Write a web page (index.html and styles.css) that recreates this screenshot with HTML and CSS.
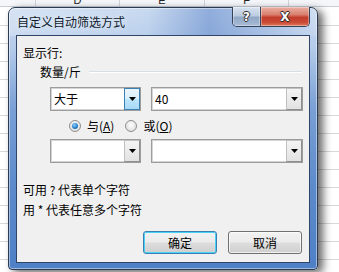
FILE: index.html
```html
<!DOCTYPE html>
<html lang="zh-CN">
<head>
<meta charset="utf-8">
<title>自定义自动筛选方式</title>
<link rel="stylesheet" href="styles.css">
</head>
<body>
<div class="sheet">
  <div class="col-head">
    <div class="hcell w36"></div>
    <div class="hcell w84">D</div>
    <div class="hcell w85">E</div>
    <div class="hcell w84">F</div>
    <div class="hcell wrest"></div>
  </div>
  <div class="grid"></div>
</div>

<div class="window">
  <div class="titlebar">
    <div class="title">自定义自动筛选方式</div>
    <div class="caption-btns">
      <div class="cbtn help">?</div>
      <div class="cbtn close">X</div>
    </div>
  </div>
  <div class="client">
    <div class="label">显示行:</div>
    <div class="group-row">
      <span class="group-name">数量/斤</span>
      <span class="group-line"></span>
    </div>
    <div class="combo-row">
      <div class="combo op">
        <span class="combo-text">大于</span>
        <span class="drop hot"><svg width="7" height="4" viewBox="0 0 7 4"><polygon points="0,0 7,0 3.5,4" fill="#000"/></svg></span>
      </div>
      <div class="combo val">
        <span class="combo-text">40</span>
        <span class="drop"><svg width="7" height="4" viewBox="0 0 7 4"><polygon points="0,0 7,0 3.5,4" fill="#000"/></svg></span>
      </div>
    </div>
    <div class="radio-row">
      <span class="radio on"></span><span class="rlabel">与(<u>A</u>)</span>
      <span class="radio"></span><span class="rlabel">或(<u>O</u>)</span>
    </div>
    <div class="combo-row second">
      <div class="combo op">
        <span class="combo-text"></span>
        <span class="drop"><svg width="7" height="4" viewBox="0 0 7 4"><polygon points="0,0 7,0 3.5,4" fill="#000"/></svg></span>
      </div>
      <div class="combo val">
        <span class="combo-text"></span>
        <span class="drop"><svg width="7" height="4" viewBox="0 0 7 4"><polygon points="0,0 7,0 3.5,4" fill="#000"/></svg></span>
      </div>
    </div>
    <div class="hints">
      <div>可用 ? 代表单个字符</div>
      <div>用 * 代表任意多个字符</div>
    </div>
    <div class="buttons">
      <div class="btn default">确定</div>
      <div class="btn">取消</div>
    </div>
  </div>
</div>
</body>
</html>
```

FILE: styles.css
```css
html, body {
  margin: 0;
  padding: 0;
}
body {
  width: 339px;
  height: 272px;
  overflow: hidden;
  background: #ffffff;
  font-family: "Noto Sans CJK SC", "Noto Sans", sans-serif;
  font-size: 12px;
  color: #000;
  position: relative;
}

/* spreadsheet behind */
.sheet {
  width: 339px;
  height: 272px;
  display: flex;
  flex-direction: column;
}
.col-head {
  height: 6px;
  display: flex;
  border-bottom: 1px solid #c6cdd6;
  background: #f4f6f9;
  flex: none;
}
.hcell {
  height: 6px;
  overflow: hidden;
  display: flex;
  align-items: flex-end;
  justify-content: center;
  border-right: 1px solid #d0d4da;
  font-family: "Liberation Sans", sans-serif;
  font-size: 11px;
  line-height: 12px;
  color: #222;
  box-sizing: border-box;
}
.w36 { width: 36px; }
.w84 { width: 84px; }
.w85 { width: 85px; }
.wrest { flex: 1; border-right: none; }
.grid {
  flex: 1;
  background: repeating-linear-gradient(to bottom, transparent 0 17px, #d8d8d8 17px 18px);
  background-position: 0 1px;
}

/* dialog window */
.window {
  position: absolute;
  left: 8px;
  top: 7px;
  width: 310px;
  height: 263px;
  box-sizing: border-box;
  border: 1px solid #2c3b54;
  border-radius: 7px 7px 4px 4px;
  background:
    linear-gradient(90deg, rgba(255,255,255,0.25) 0, rgba(255,255,255,0) 45%, rgba(40,90,180,0.35) 65%, rgba(255,255,255,0.15) 100%) 0 0 / 100% 28px no-repeat,
    linear-gradient(180deg, #c9daf0 0, #b4cbea 40px, #7aa0d6 100px, #5c8acb 180px, #4f80c6 100%);
  box-shadow: inset 0 0 0 1px rgba(255,255,255,0.45), 5px 3px 9px rgba(0,0,0,0.6);
  padding: 0 7px 6px 7px;
  display: flex;
  flex-direction: column;
}
.titlebar {
  height: 27px;
  flex: none;
  display: flex;
  align-items: flex-start;
  justify-content: space-between;
}
.title {
  padding-left: 1px;
  margin-top: 5px;
  line-height: 17px;
  font-size: 12px;
  color: #0e1a2b;
  text-shadow: 0 0 6px rgba(255,255,255,0.9);
}
.caption-btns {
  display: flex;
  margin-top: -1px;
  height: 19px;
  border: 1px solid #34435a;
  border-top: none;
  border-radius: 0 0 5px 5px;
  overflow: hidden;
  margin-right: 0;
}
.cbtn {
  height: 19px;
  display: flex;
  align-items: center;
  justify-content: center;
  font-family: "DejaVu Sans", sans-serif;
  font-weight: bold;
  color: #fff;
  font-size: 12px;
  text-shadow: 1px 0 0 #2a2a2a, -1px 0 0 #2a2a2a, 0 1px 0 #2a2a2a, 0 -1px 0 #2a2a2a;
  box-shadow: inset 0 0 0 1px rgba(255,255,255,0.35);
}
.help {
  width: 27px;
  border-right: 1px solid #3a4458;
  background: linear-gradient(180deg, #d9e4f1 0, #bccbdf 45%, #91a8c6 55%, #a8bcd6 100%);
}
.close {
  width: 48px;
  background: linear-gradient(180deg, #eab1a4 0, #d9806f 40%, #c33c2a 55%, #c94a35 80%, #dd7a5c 100%);
}

.client {
  flex: 1;
  background: #f0f0f0;
  border: 1px solid #2f4466;
  display: flex;
  flex-direction: column;
}
.label {
  margin-top: 9px;
  margin-left: 6px;
  line-height: 16px;
}
.group-row {
  margin-top: 2px;
  margin-left: 23px;
  margin-right: 7px;
  height: 17px;
  display: flex;
  align-items: center;
  gap: 8px;
}
.group-name {
  line-height: 17px;
}
.group-line {
  flex: 1;
  height: 0;
  border-top: 1px solid #d5dfe5;
  border-bottom: 1px solid #ffffff;
}

.combo-row {
  margin-top: 7px;
  margin-left: 33px;
  display: flex;
  gap: 10px;
}
.combo-row.second {
  margin-top: 5px;
}
.combo {
  height: 24px;
  box-sizing: border-box;
  border: 1px solid #9c9c9c;
  box-shadow: inset 0 0 0 1px #d4d4d4;
  background: #fff;
  display: flex;
  align-items: stretch;
}
.combo.op { width: 91px; }
.combo.val { width: 152px; }
.combo-text {
  flex: 1;
  padding-left: 3px;
  line-height: 22px;
}
.drop {
  width: 16px;
  box-sizing: border-box;
  border: 1px solid #8e8e8e;
  border-left-color: #c0c0c0;
  border-top-color: #c0c0c0;
  background: linear-gradient(180deg, #f4f4f4, #e2e2e2);
  display: flex;
  align-items: center;
  justify-content: center;
}
.drop.hot {
  border: 1px solid #3c7fb1;
  background: linear-gradient(180deg, #eaf6fd 0, #d9f0fc 50%, #bee6fd 50%, #a7d9f5 100%);
}

.radio-row {
  margin-top: 7px;
  margin-left: 52px;
  height: 16px;
  display: flex;
  align-items: center;
}
.radio {
  width: 12px;
  height: 12px;
  box-sizing: border-box;
  border-radius: 50%;
  border: 1px solid #8f8f8f;
  background: radial-gradient(circle at 50% 40%, #ffffff 0, #e6e6e6 60%, #cfcfcf 100%);
  margin-right: 6px;
  display: flex;
  align-items: center;
  justify-content: center;
}
.radio.on::after {
  content: "";
  width: 6px;
  height: 6px;
  border-radius: 50%;
  background: radial-gradient(circle at 40% 35%, #8fd0ff 0, #2d88d0 50%, #164f86 100%);
}
.rlabel {
  line-height: 16px;
  margin-right: 11px;
}
.rlabel u {
  text-decoration: underline;
  text-underline-offset: 1px;
}

.hints {
  margin-top: 17px;
  margin-left: 6px;
  line-height: 20px;
}

.buttons {
  margin-top: 11px;
  margin-right: 7px;
  display: flex;
  justify-content: flex-end;
  gap: 11px;
}
.btn {
  width: 74px;
  height: 23px;
  box-sizing: border-box;
  border: 1px solid #707070;
  border-radius: 3px;
  background: linear-gradient(180deg, #f2f2f2 0, #ebebeb 48%, #dddddd 52%, #cfcfcf 100%);
  box-shadow: inset 0 0 0 1px rgba(255,255,255,0.7);
  display: flex;
  align-items: center;
  justify-content: center;
  line-height: 21px;
}
.btn.default {
  border-color: #3c7fb1;
  box-shadow: inset 0 0 0 1px #48d2f8;
}
```
